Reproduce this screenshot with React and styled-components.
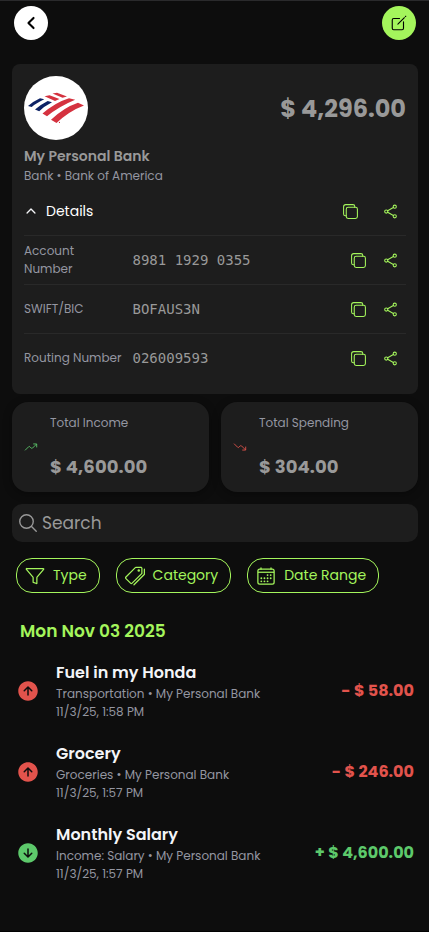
import React from 'react';
import styled, { createGlobalStyle } from 'styled-components';
import {
  IoArrowDownCircle,
  IoArrowUpCircle,
  IoCalendarOutline,
  IoChevronBack,
  IoChevronUp,
  IoCopyOutline,
  IoCreateOutline,
  IoFunnelOutline,
  IoPricetagsOutline,
  IoSearchOutline,
  IoShareSocialOutline,
  IoTrendingDown,
  IoTrendingUp,
} from 'react-icons/io5';

const lime = '#a4f55c';
const red = '#e2534c';
const green = '#5dc96b';
const grey = '#999999';
const muted = '#9496a1';
const surface = '#1d1d1d';

const GlobalStyle = createGlobalStyle`
  * { box-sizing: border-box; }
  body {
    margin: 0;
    background: #0d0d0d;
    color: #f4f5f8;
    font-family: Poppins, Inter, sans-serif;
    font-size: 12px;
    line-height: 18px;
  }
  svg { display: block; flex: none; }
  button { font: inherit; border: 0; padding: 0; cursor: pointer; }
`;

const Page = styled.main`
  display: flex;
  flex-direction: column;
  height: 932px;
  padding: 5px 11px 0 12px;
  overflow: hidden;
  border-top: 1px solid #2a2a2c;
  border-bottom: 1px solid #020202;
`;

const Header = styled.header`
  display: flex;
  justify-content: space-between;
  padding: 0 2px;
  height: 58px;
`;

const RoundButton = styled.button`
  display: flex;
  align-items: center;
  justify-content: center;
  width: 34px;
  height: 34px;
  border-radius: 50%;
  color: #000;
  background: ${(p) => p.$bg};
`;

const BackIcon = styled(IoChevronBack)`
  path { stroke-width: 60px; }
`;

const AccountCard = styled.section`
  height: 330px;
  padding: 12px 12px 0;
  border-radius: 8px;
  background: ${surface};
`;

const Summary = styled.div`
  display: flex;
  align-items: center;
  justify-content: space-between;
  height: 64px;
`;

const Avatar = styled.div`
  width: 64px;
  height: 64px;
  border-radius: 50%;
  background: #fff;
  overflow: hidden;
`;

const Balance = styled.strong`
  padding-top: 2px;
  font-size: 24px;
  font-weight: 700;
  line-height: 36px;
  color: ${grey};
`;

const AccountName = styled.h1`
  margin: 6px 0 0;
  font-size: 14px;
  font-weight: 600;
  line-height: 21px;
  color: ${grey};
`;

const Muted = styled.span`
  display: block;
  color: ${muted};
`;

const DetailsHeader = styled.div`
  display: flex;
  align-items: center;
  height: 51px;
  padding-top: 2px;
  border-bottom: 1px solid #292929;
`;

const DetailsTitle = styled.span`
  flex: 1;
  margin-left: 8px;
  font-size: 14px;
  color: #fff;
`;

const DetailRow = styled.div`
  display: flex;
  align-items: center;
  height: 49px;
  border-bottom: 1px solid ${(p) => (p.$last ? 'transparent' : '#292929')};
`;

const DetailLabel = styled.span`
  width: 108.5px;
  padding-right: ${(p) => (p.$wrap ? '40px' : '0')};
  color: ${muted};
`;

const DetailValue = styled.span`
  flex: 1;
  font-family: "DejaVu Sans Mono", monospace;
  font-size: 14px;
  color: ${grey};
`;

const Actions = styled.div`
  display: flex;
  align-items: center;
  gap: ${(p) => p.$gap}px;
  padding-right: 7px;
  color: ${lime};
`;

const Stats = styled.div`
  display: grid;
  grid-template-columns: 1fr 1fr;
  gap: 12px;
  margin-top: 8px;
`;

const StatCard = styled.section`
  display: flex;
  align-items: center;
  gap: 12px;
  height: 90px;
  padding: 0 12px;
  border-radius: 16px;
  background: ${surface};
  color: ${(p) => p.$tone};
  box-shadow: 0 2px 8px rgba(0, 0, 0, 0.35);
`;

const StatBody = styled.div`
  display: flex;
  flex-direction: column;
  height: 66px;
  justify-content: space-between;
`;

const StatValue = styled.strong`
  font-size: 18px;
  font-weight: 700;
  line-height: 27px;
  letter-spacing: 0.08px;
  color: ${grey};
`;

const SearchBar = styled.div`
  display: flex;
  align-items: center;
  gap: 4px;
  height: 38px;
  margin-top: 12px;
  padding-left: 6px;
  border-radius: 10px;
  background: ${surface};
  color: ${grey};
  font-size: 17px;
`;

const SearchIcon = styled(IoSearchOutline)`
  transform: scale(1.1);
`;

const Filters = styled.div`
  display: flex;
  gap: 16px;
  margin: 16px 0 0 4px;
`;

const FilterChip = styled.button`
  display: flex;
  align-items: center;
  gap: 8px;
  height: 35px;
  padding: 0 12px 0 8px;
  border: 1px solid ${lime};
  border-radius: 16px;
  background: transparent;
  color: ${lime};
  font-size: 14px;
`;

const ChipLabel = styled.span`
  padding-bottom: 1px;
`;

const DateHeading = styled.h2`
  margin: 25px 0 0 8px;
  font-size: 17px;
  font-weight: 600;
  line-height: 26px;
  color: ${lime};
`;

const Transaction = styled.article`
  display: flex;
  align-items: center;
  height: 81px;
  padding: 0 4px;
`;

const StatusIcon = styled.span`
  width: 40px;
  color: ${(p) => p.$tone};
`;

const TransactionText = styled.div`
  flex: 1;
`;

const TransactionName = styled.h3`
  margin: 0;
  font-size: 16px;
  font-weight: 600;
  line-height: 24px;
  color: #f4f5f8;
`;

const Amount = styled.strong`
  font-size: 16px;
  font-weight: 700;
  line-height: 24px;
  color: ${(p) => p.$tone};
`;

const List = styled.div`
  margin-top: 6px;
`;

function BankLogo() {
  return (
    <svg width="64" height="64" viewBox="0 0 64 64">
      <g fill="#0d2265">
        <path d="M4 30 Q10 25 16 22.300 L20.300 23.300 Q12 27.300 7.700 31Z" />
        <path d="M11 33.500 Q18 27.800 23.700 25 L28 26.300 Q20 30.500 15.200 35.200Z" />
      </g>
      <g fill="#d5323f">
        <path d="M28.500 17.400 L33 16.800 L43 20.500 L38.500 21.700Z" />
        <path d="M20.500 20.300 L25.500 19.300 L35.500 23 L31 25Z" />
        <path d="M18.500 37.600 Q31 26.500 45 22.200 L51.200 23.800 Q35 30.500 23 40.300Z" />
        <path d="M27 43.800 Q40 31.500 54 26.800 L60 29.400 Q45 35 32.500 47Z" />
        <circle cx="35.500" cy="46.400" r="0.6" />
      </g>
    </svg>
  );
}

const details = [
  { label: 'Account Number', value: '8981 1929 0355', wrap: true },
  { label: 'SWIFT/BIC', value: 'BOFAUS3N' },
  { label: 'Routing Number', value: '026009593' },
];

const transactions = [
  { name: 'Fuel in my Honda', category: 'Transportation', time: '11/3/25, 1:58 PM', amount: '- $ 58.00' },
  { name: 'Grocery', category: 'Groceries', time: '11/3/25, 1:57 PM', amount: '- $ 246.00' },
  { name: 'Monthly Salary', category: 'Income: Salary', time: '11/3/25, 1:57 PM', amount: '+ $ 4,600.00', income: true },
];

export default function App() {
  return (
    <>
      <GlobalStyle />
      <Page>
        <Header>
          <RoundButton $bg="#fff" aria-label="Back"><BackIcon size={18} /></RoundButton>
          <RoundButton $bg={lime} aria-label="Edit"><IoCreateOutline size={18} /></RoundButton>
        </Header>

        <AccountCard>
          <Summary>
            <Avatar><BankLogo /></Avatar>
            <Balance>$ 4,296.00</Balance>
          </Summary>
          <AccountName>My Personal Bank</AccountName>
          <Muted>Bank • Bank of America</Muted>
          <DetailsHeader>
            <IoChevronUp size={14} />
            <DetailsTitle>Details</DetailsTitle>
            <Actions $gap={23}>
              <IoCopyOutline size={17} />
              <IoShareSocialOutline size={17} />
            </Actions>
          </DetailsHeader>
          {details.map((d, i) => (
            <DetailRow key={d.label} $last={i === details.length - 1}>
              <DetailLabel $wrap={d.wrap}>{d.label}</DetailLabel>
              <DetailValue>{d.value}</DetailValue>
              <Actions $gap={15}>
                <IoCopyOutline size={17} />
                <IoShareSocialOutline size={17} />
              </Actions>
            </DetailRow>
          ))}
        </AccountCard>

        <Stats>
          <StatCard $tone={green}>
            <IoTrendingUp size={14} />
            <StatBody>
              <Muted>Total Income</Muted>
              <StatValue>$ 4,600.00</StatValue>
            </StatBody>
          </StatCard>
          <StatCard $tone={red}>
            <IoTrendingDown size={14} />
            <StatBody>
              <Muted>Total Spending</Muted>
              <StatValue>$ 304.00</StatValue>
            </StatBody>
          </StatCard>
        </Stats>

        <SearchBar>
          <SearchIcon size={20} />
          Search
        </SearchBar>

        <Filters>
          <FilterChip><IoFunnelOutline size={20} /><ChipLabel>Type</ChipLabel></FilterChip>
          <FilterChip><IoPricetagsOutline size={20} /><ChipLabel>Category</ChipLabel></FilterChip>
          <FilterChip><IoCalendarOutline size={20} /><ChipLabel>Date Range</ChipLabel></FilterChip>
        </Filters>

        <DateHeading>Mon Nov 03 2025</DateHeading>
        <List>
          {transactions.map((t) => (
            <Transaction key={t.name}>
              <StatusIcon $tone={t.income ? green : red}>
                {t.income ? <IoArrowDownCircle size={24} /> : <IoArrowUpCircle size={24} />}
              </StatusIcon>
              <TransactionText>
                <TransactionName>{t.name}</TransactionName>
                <Muted>{t.category} • My Personal Bank</Muted>
                <Muted>{t.time}</Muted>
              </TransactionText>
              <Amount $tone={t.income ? green : red}>{t.amount}</Amount>
            </Transaction>
          ))}
        </List>
      </Page>
    </>
  );
}
